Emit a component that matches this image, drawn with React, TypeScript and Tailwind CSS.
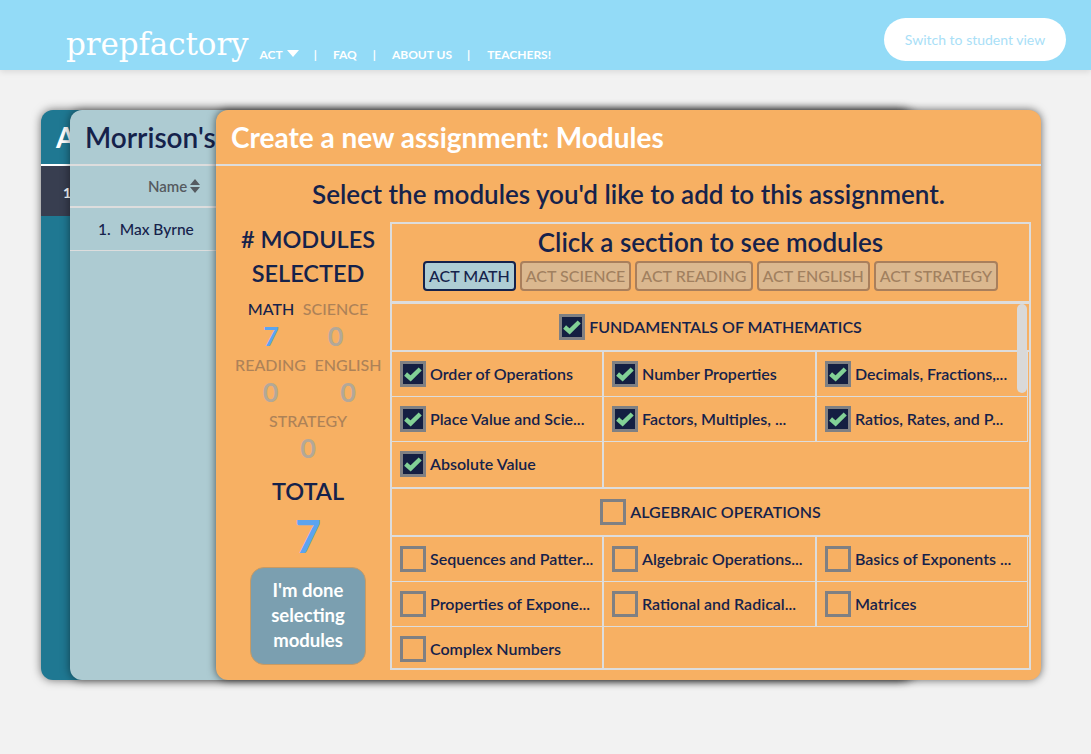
import React from "react";

const navy = "text-[#15224b]";

function Check({ on }: { on: boolean }) {
  return (
    <span className={`inline-flex h-[26px] w-[26px] shrink-0 items-center justify-center border-[3px] border-[#7f8083] ${on ? "bg-[#141f42]" : ""}`}>
      {on && (
        <svg width="20" height="20" viewBox="0 0 20 20">
          <path d="M2.6 10 L7.6 14.4 L17.2 5" fill="none" stroke="#82d196" strokeWidth="4.4" />
        </svg>
      )}
    </span>
  );
}

function Cell({ label, w, right, hasBottom, h }: { label?: [string, boolean]; w: string; right: string; hasBottom: boolean; h: string }) {
  return (
    <div className={`flex ${h} ${w} items-center gap-[4px] pl-[8px] ${right} ${hasBottom ? "border-b border-[#dddddd]" : ""}`}>
      {label && <Check on={label[1]} />}
      {label && <span className={`text-[16px] font-semibold whitespace-nowrap ${navy}`}>{label[0]}</span>}
    </div>
  );
}

function Group({ title, on, rows, lastH }: { title: string; on: boolean; rows: string[][]; lastH: string }) {
  return (
    <div>
      <div className={`flex h-[48px] items-center justify-center gap-[4px] border-b-[2px] border-[#dddddd] text-[16px] font-semibold ${navy}`}>
        <Check on={on} />
        <span>{title}</span>
      </div>
      {rows.map((r, i) => {
        const last = i === rows.length - 1;
        const h = last ? lastH : "h-[45px]";
        return (
          <div key={i} className="flex">
            <Cell label={[r[0], on]} w="w-[212px]" right="border-r-[2px] border-[#dddddd]" hasBottom={!last} h={h} />
            {r.length > 1 && <Cell label={[r[1], on]} w="w-[213px]" right="border-r-[2px] border-[#dddddd]" hasBottom={!last} h={h} />}
            {r.length > 1 && <Cell label={[r[2], on]} w="w-[211px]" right="border-r border-[#dddddd]" hasBottom={!last} h={h} />}
          </div>
        );
      })}
    </div>
  );
}

function Stat({ label, value, active, w }: { label: string; value: string; active?: boolean; w: string }) {
  return (
    <div className={`flex ${w} flex-col items-center pb-[3px]`}>
      <span className={`text-[16px] leading-[20px] font-medium ${active ? navy : "text-[#ad8258]"}`}>{label}</span>
      <span className={`text-[27px] leading-[33px] font-bold ${active ? "text-[#5ba4f0]" : "text-[#b3a898]"}`}>{value}</span>
    </div>
  );
}

function Tab({ label, active }: { label: string; active?: boolean }) {
  return (
    <span className={`flex h-[30px] items-center rounded-[4px] border-[2px] px-[4px] text-[16px] font-medium ${active ? "border-[#15224b] bg-[#aecdd4] text-[#15224b]" : "border-[#a97f5c] bg-[#dbb88f] text-[#a1805f]"}`}>
      {label}
    </span>
  );
}

export default function App() {
  return (
    <div className="flex h-[754px] flex-col overflow-hidden bg-[#f2f2f2] font-['Lato','Liberation_Sans',sans-serif]">
      <header className="z-10 flex h-[70px] shrink-0 items-start bg-[#93dbf7] pl-[66px] pr-[25px] shadow-[0_2px_6px_rgba(0,0,0,0.1)]">
        <span className="mt-[24px] font-['DejaVu_Serif',serif] text-[31px] leading-[40px] tracking-[-0.1px] text-white">prepfactory</span>
        <nav className="mt-[47px] ml-[11px] flex items-center text-[12px] leading-[16px] font-bold text-white">
          <span className="flex items-center gap-[4px]">
            ACT
            <svg width="12" height="8" viewBox="0 0 12 8" className="mb-[3px]"><path d="M0 0H12L6 7Z" fill="#fff" /></svg>
          </span>
          <span className="ml-[15px]">|</span>
          <span className="ml-[16px]">FAQ</span>
          <span className="ml-[16px]">|</span>
          <span className="ml-[16px]">ABOUT US</span>
          <span className="ml-[15px]">|</span>
          <span className="ml-[17px]">TEACHERS!</span>
        </nav>
        <button className="mt-[18px] ml-auto h-[43px] w-[182px] rounded-full bg-white text-[14px] text-[#a9e0f7]">Switch to student view</button>
      </header>

      <main className="relative flex-1">
        {/* back window */}
        <div className="absolute top-[40px] left-[41px] h-[570px] w-[875px] overflow-hidden rounded-[12px] bg-[#1f7892] shadow-[0_0_10px_rgba(0,0,0,0.55)]">
          <div className="h-[56px] border-b-[2px] border-white pt-[9px] pl-[15px] text-[28px] leading-[36px] font-bold text-white">A</div>
          <div className="h-[50px] bg-[#383e50] pt-[17px] pl-[22px] text-[14px] leading-[20px] font-bold text-white">1</div>
        </div>

        {/* middle window */}
        <div className="absolute top-[40px] left-[70px] h-[570px] w-[840px] overflow-hidden rounded-[12px] bg-[#adcbd2] shadow-[0_0_10px_rgba(0,0,0,0.5)]">
          <div className={`h-[56px] border-b-[2px] border-[#dddddd] pt-[9px] pl-[15px] text-[28px] leading-[36px] font-semibold ${navy}`}>Morrison's</div>
          <div className="flex h-[42px] items-center gap-[3px] border-b-[2px] border-[#dddddd] pl-[78px] text-[15px] font-semibold text-[#555a60]">
            Name
            <svg width="10" height="14" viewBox="0 0 10 14"><path d="M0 6 5 0 10 6ZM0 8 5 14 10 8Z" fill="#555a60" /></svg>
          </div>
          <div className={`flex h-[43px] items-center gap-[9px] border-b border-[#dddddd] pt-[1px] pl-[28px] text-[15.5px] font-medium ${navy}`}>
            <span>1.</span>
            <span>Max Byrne</span>
          </div>
        </div>

        {/* front window */}
        <div className="absolute top-[40px] left-[216px] flex h-[570px] w-[825px] flex-col overflow-hidden rounded-[12px] bg-[#f7b063] shadow-[0_0_8px_rgba(0,0,0,0.6)]">
          <div className="h-[56px] shrink-0 border-b-[2px] border-[#dddddd] pt-[9px] pl-[15px] text-[28px] leading-[36px] font-bold text-white">Create a new assignment: Modules</div>
          <div className={`mt-[10px] text-center text-[26px] leading-[36px] font-semibold ${navy}`}>Select the modules you'd like to add to this assignment.</div>
          <div className="mt-[10px] flex">
            <aside className="flex w-[174px] shrink-0 flex-col items-center pl-[10px]">
              <div className={`text-center text-[23.5px] leading-[34px] font-semibold ${navy}`}># MODULES<br />SELECTED</div>
              <div className="mt-[9px] flex justify-center gap-[8px]">
                <Stat label="MATH" value="7" active w="w-[47px]" />
                <Stat label="SCIENCE" value="0" w="w-[66px]" />
              </div>
              <div className="flex justify-center gap-[8px]">
                <Stat label="READING" value="0" w="w-[72px]" />
                <Stat label="ENGLISH" value="0" w="w-[67px]" />
              </div>
              <Stat label="STRATEGY" value="0" w="w-[80px]" />
              <div className={`mt-[7px] text-[23.5px] leading-[34px] font-semibold ${navy}`}>TOTAL</div>
              <div className="mt-[1px] text-[45px] leading-[54px] font-bold text-[#5ba4f0]">7</div>
              <button className="mt-[4px] h-[98px] w-[116px] rounded-[14px] border border-[#c99a62] bg-[#7b9fb0] pb-[2px] text-[18.5px] leading-[25px] font-bold text-white">I'm done<br />selecting<br />modules</button>
            </aside>
            <section className="relative h-[448px] w-[641px] border-[2px] border-[#dddddd]">
              <div className="flex h-[80px] flex-col items-center border-b-[3px] border-[#dddddd]">
                <div className={`mt-[1px] text-[26px] leading-[34px] font-semibold ${navy}`}>Click a section to see modules</div>
                <div className="mt-[2px] flex gap-[4px]">
                  <Tab label="ACT MATH" active />
                  <Tab label="ACT SCIENCE" />
                  <Tab label="ACT READING" />
                  <Tab label="ACT ENGLISH" />
                  <Tab label="ACT STRATEGY" />
                </div>
              </div>
              <div className="h-[364px] w-[637px] overflow-hidden">
                <Group
                  title="FUNDAMENTALS OF MATHEMATICS"
                  on
                  lastH="h-[45px] pb-[1px]"
                  rows={[
                    ["Order of Operations", "Number Properties", "Decimals, Fractions,..."],
                    ["Place Value and Scie...", "Factors, Multiples, ...", "Ratios, Rates, and P..."],
                    ["Absolute Value"],
                  ]}
                />
                <div className="border-t-[2px] border-[#dddddd]">
                  <Group
                    title="ALGEBRAIC OPERATIONS"
                    on={false}
                    lastH="h-[44px]"
                    rows={[
                      ["Sequences and Patter...", "Algebraic Operations...", "Basics of Exponents ..."],
                      ["Properties of Expone...", "Rational and Radical...", "Matrices"],
                      ["Complex Numbers"],
                    ]}
                  />
                </div>
              </div>
              <div className="absolute top-[80px] right-[2px] h-[89px] w-[10px] rounded-full bg-[#d9d9d9]" />
            </section>
          </div>
        </div>
      </main>
    </div>
  );
}
